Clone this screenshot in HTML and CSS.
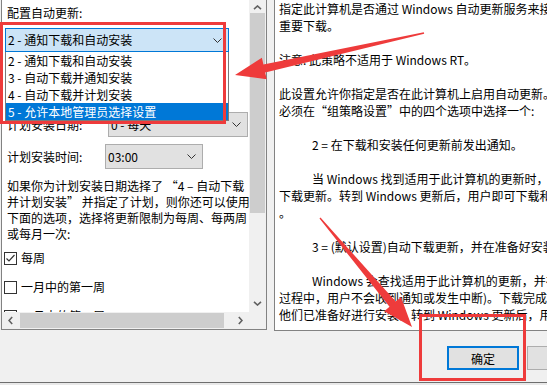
FILE: index.html
```html
<!DOCTYPE html>
<html lang="zh-CN">
<head>
<meta charset="utf-8">
<title>配置自动更新</title>
<link rel="stylesheet" href="styles.css">
</head>
<body>
<div class="dialog">
  <div class="panels">
    <div class="options">
      <div class="options-view">
        <div class="options-content">
          <div class="label-top">配置自动更新:</div>
          <div class="combo-wrap">
            <div class="combo combo-open">
              <span>2 - 通知下载和自动安装</span>
              <svg class="chev" width="9" height="5" viewBox="0 0 9 5"><polyline points="0.5,0.5 4.5,4.5 8.5,0.5" fill="none" stroke="#333" stroke-width="1"/></svg>
            </div>
            <ul class="droplist">
              <li>2 - 通知下载和自动安装</li>
              <li>3 - 自动下载并通知安装</li>
              <li>4 - 自动下载并计划安装</li>
              <li class="selected">5 - 允许本地管理员选择设置</li>
            </ul>
          </div>
          <div class="field-row row-date">
            <span class="field-label">计划安装日期:</span>
            <div class="combo combo-date">
              <span>0 - 每天</span>
              <svg class="chev" width="9" height="5" viewBox="0 0 9 5"><polyline points="0.5,0.5 4.5,4.5 8.5,0.5" fill="none" stroke="#333" stroke-width="1"/></svg>
            </div>
          </div>
          <div class="field-row row-time">
            <span class="field-label">计划安装时间:</span>
            <div class="combo combo-time">
              <span>03:00</span>
              <svg class="chev" width="9" height="5" viewBox="0 0 9 5"><polyline points="0.5,0.5 4.5,4.5 8.5,0.5" fill="none" stroke="#333" stroke-width="1"/></svg>
            </div>
          </div>
          <p class="note">如果你为计划安装日期选择了 “4 – 自动下载<br>并计划安装” 并指定了计划，则你还可以使用<br>下面的选项，选择将更新限制为每周、每两周<br>或每月一次:</p>
          <div class="check check-first"><span class="box"><svg width="11" height="11" viewBox="0 0 11 11"><polyline points="1.5,5.5 4,8 9.5,2" fill="none" stroke="#333" stroke-width="1.2"/></svg></span>每周</div>
          <div class="check"><span class="box"></span>一月中的第一周</div>
          <div class="check"><span class="box"></span>一月中的第二周</div>
        </div>
      </div>
      <div class="vscroll">
        <div class="sb-btn sb-up"><svg width="9" height="5" viewBox="0 0 9 5"><polyline points="1,4.2 4.5,1 8,4.2" fill="none" stroke="#606060" stroke-width="1.6"/></svg></div>
        <div class="vthumb"></div>
        <div class="sb-track"></div>
        <div class="sb-btn sb-down"><svg width="9" height="5" viewBox="0 0 9 5"><polyline points="1,0.8 4.5,4 8,0.8" fill="none" stroke="#606060" stroke-width="1.6"/></svg></div>
      </div>
      <div class="hscroll">
        <div class="sb-btn sb-left"><svg width="5" height="9" viewBox="0 0 5 9"><polyline points="4.2,1 1,4.5 4.2,8" fill="none" stroke="#606060" stroke-width="1.6"/></svg></div>
        <div class="hthumb"></div>
        <div class="sb-track"></div>
        <div class="sb-btn sb-right"><svg width="5" height="9" viewBox="0 0 5 9"><polyline points="0.8,1 4,4.5 0.8,8" fill="none" stroke="#606060" stroke-width="1.6"/></svg></div>
      </div>
      <div class="corner"></div>
    </div>
    <div class="help">
      <p>指定此计算机是否通过 Windows 自动更新服务来接收安全更新和其他<br>重要下载。</p>
      <p>注意: 此策略不适用于 Windows RT。</p>
      <p>此设置允许你指定是否在此计算机上启用自动更新。如果启用此服务，则<br>必须在“组策略设置”中的四个选项中选择一个:</p>
      <p class="indent">2 = 在下载和安装任何更新前发出通知。</p>
      <p class="indent">当 Windows 找到适用于此计算机的更新时，将通知用户<br>下载更新。转到 Windows 更新后，用户即可下载和安装任何可用更新<br>。</p>
      <p class="indent">3 = (默认设置)自动下载更新，并在准备好安装时发出通知</p>
      <p class="indent">Windows 会查找适用于此计算机的更新，并在后台下载这些更新(在此<br>过程中，用户不会收到通知或发生中断)。下载完成后，将通知用户<br>他们已准备好进行安装。转到 Windows 更新后，用户即可安装这些更新。</p>
    </div>
  </div>
  <div class="buttons">
    <button class="btn btn-default">确定</button>
    <button class="btn">取消</button>
  </div>
</div>
<div class="taskbar"></div>

<div class="mark mark-combo"></div>
<div class="mark mark-ok"></div>
<svg class="arrows" width="547" height="385" viewBox="0 0 547 385">
  <polygon points="235,75 261.9,57.8 263.4,64.6 423.8,32.3 424.2,33.7 265.2,72.4 266.7,79.2" fill="#ee3b3b"/>
  <polygon points="412,327 401,297 395.7,301.5 320.5,217.5 319.5,218.5 389.5,306.7 384.2,311.2" fill="#ee3b3b"/>
</svg>
</body>
</html>
```
FILE: styles.css
```css
* { box-sizing: border-box; }
html, body { margin: 0; padding: 0; }
body {
  width: 547px;
  height: 385px;
  overflow: hidden;
  position: relative;
  background: #f0f0f0;
  color: #000;
  font-family: "Noto Sans CJK SC", "Noto Sans", sans-serif;
  font-size: 12px;
}
.dialog { width: 620px; }
.panels {
  display: flex;
  align-items: flex-start;
  gap: 7px;
  padding-left: 1px;
}

/* left options panel */
.options {
  width: 266px;
  height: 330px;
  border: 1px solid #828282;
  border-top: 0;
  display: grid;
  grid-template-columns: 247px 17px;
  grid-template-rows: 312px 17px;
  background: #fff;
}
.options-view { overflow: hidden; background: #fff; }
.options-content { padding-left: 5px; line-height: 16px; white-space: nowrap; }
.label-top { margin-top: 5px; }
.combo-wrap { position: relative; margin: 7px 0 0 -2px; width: 224px; }
.combo {
  display: flex;
  align-items: center;
  justify-content: space-between;
  border: 1px solid #adadad;
  background: #e1e1e1;
  padding: 0 6px 0 2px;
}
.combo-open { height: 24px; background: #cce4f7; border-color: #0078d7; }
.droplist {
  position: absolute;
  left: 0;
  top: 100%;
  width: 224px;
  margin: 0;
  padding: 0;
  list-style: none;
  background: #fff;
  border: 1px solid #7a7a7a;
  border-top: 0;
  z-index: 2;
}
.droplist li { height: 17px; line-height: 17px; padding-left: 2px; }
.droplist li.selected { background: #0078d7; color: #fff; }
.field-row { display: flex; align-items: center; }
.row-date { margin-top: 60px; }
.row-time { margin-top: 7px; }
.row-date .field-label { width: 101px; }
.row-time .field-label { width: 98px; }
.combo-date { width: 140px; height: 25px; }
.combo-time { width: 98px; height: 25px; }
.note { margin: 9px 0 0; line-height: 16px; }
.check {
  display: flex;
  align-items: center;
  gap: 4px;
  height: 16px;
  margin: 13px 0 0 -3px;
}
.check-first { margin-top: 8px; }
.box {
  width: 13px;
  height: 13px;
  border: 1px solid #333;
  background: #fff;
  display: flex;
  align-items: center;
  justify-content: center;
}

/* scrollbars */
.vscroll { display: flex; flex-direction: column; background: #f0f0f0; }
.hscroll { display: flex; background: #f0f0f0; }
.corner { background: #f0f0f0; }
.sb-btn { display: flex; align-items: center; justify-content: center; flex: none; }
.sb-up { height: 13px; align-items: flex-end; padding-bottom: 3px; }
.sb-down { height: 17px; }
.sb-left, .sb-right { width: 17px; }
.sb-track { flex: 1; }
.vthumb { height: 200px; margin: 0 1px; background: #cdcdcd; }
.hthumb { width: 204px; margin: 1px 0 1px 1px; background: #cdcdcd; }

/* right help panel */
.help {
  flex: 1;
  height: 331px;
  background: #fff;
  border-left: 1px solid #828282;
  border-bottom: 1px solid #828282;
  padding-left: 4px;
  line-height: 17px;
  white-space: nowrap;
  overflow: hidden;
}
.help p { margin: 0 0 17px; }
.help .indent { text-indent: 33px; }

/* buttons */
.buttons {
  display: flex;
  justify-content: flex-end;
  gap: 8px;
  margin-top: 15px;
  padding-right: 20px;
}
.btn {
  width: 73px;
  height: 24px;
  border: 1px solid #adadad;
  background: #e1e1e1;
  font-family: inherit;
  font-size: 12px;
  color: #000;
  padding: 0;
}
.btn-default { width: 72px; border: 2px solid #0078d7; }

.taskbar {
  margin-top: 12px;
  height: 10px;
  border-top: 1px solid #6e6e6e;
  background: #e9e9e9;
}

/* annotation overlays */
.mark { position: absolute; border: 3px solid #ee3b3b; z-index: 5; }
.mark-combo { left: 0; top: 22px; width: 226px; height: 102px; }
.mark-ok { left: 419px; top: 314px; width: 107px; height: 67px; }
.arrows { position: absolute; left: 0; top: 0; z-index: 6; pointer-events: none; }
```
